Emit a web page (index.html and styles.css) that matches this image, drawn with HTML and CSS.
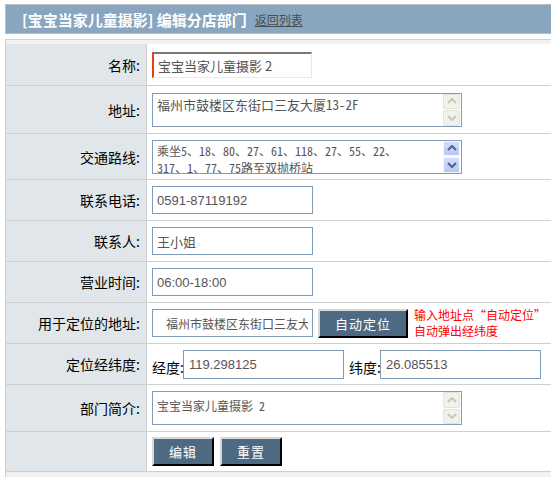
FILE: index.html
```html
<!DOCTYPE html>
<html lang="zh-CN">
<head>
    <meta charset="UTF-8">
    <title>编辑分店部门</title>
    <link rel="stylesheet" href="styles.css">
</head>
<body>
<div class="page">

    <!-- 标题栏 -->
    <div class="titlebar">
        <span class="title">[宝宝当家儿童摄影] 编辑分店部门</span>
        <a class="back" href="#">返回列表</a>
    </div>

    <form>
        <table class="edittable">
            <colgroup>
                <col class="labelcol">
                <col>
            </colgroup>
            <tr class="topband"><td colspan="2"></td></tr>
            <tr class="r45">
                <td class="label">名称:</td>
                <td class="field"><input class="nameinput" type="text" value="宝宝当家儿童摄影 2"></td>
            </tr>
            <tr class="r48">
                <td class="label">地址:</td>
                <td class="field">
                    <div class="areabox">
                        <textarea class="area addr">福州市鼓楼区东街口三友大厦13-2F</textarea>
                        <div class="scroll off">
                            <span class="sbtn"><svg width="10" height="6" viewBox="0 0 10 6"><polyline points="1,5 5,1 9,5"/></svg></span>
                            <span class="sbtn"><svg width="10" height="6" viewBox="0 0 10 6"><polyline points="1,1 5,5 9,1"/></svg></span>
                        </div>
                    </div>
                </td>
            </tr>
            <tr class="r46">
                <td class="label">交通路线:</td>
                <td class="field">
                    <div class="areabox">
                        <textarea class="area route">乘坐5、18、80、27、61、118、27、55、22、
317、1、77、75路至双抛桥站</textarea>
                        <div class="scroll on">
                            <span class="sbtn"><svg width="10" height="6" viewBox="0 0 10 6"><polyline points="1,5 5,1 9,5"/></svg></span>
                            <span class="sbtn"><svg width="10" height="6" viewBox="0 0 10 6"><polyline points="1,1 5,5 9,1"/></svg></span>
                        </div>
                    </div>
                </td>
            </tr>
            <tr class="r41">
                <td class="label">联系电话:</td>
                <td class="field"><input class="textinput" type="text" value="0591-87119192"></td>
            </tr>
            <tr class="r41">
                <td class="label">联系人:</td>
                <td class="field"><input class="textinput" type="text" value="王小姐"></td>
            </tr>
            <tr class="r41">
                <td class="label">营业时间:</td>
                <td class="field"><input class="textinput" type="text" value="06:00-18:00"></td>
            </tr>
            <tr class="r41">
                <td class="label">用于定位的地址:</td>
                <td class="field">
                    <div class="line">
                        <input class="textinput locinput" type="text" value="福州市鼓楼区东街口三友大厦13-2F">
                        <button class="btn locbtn" type="button">自动定位</button>
                        <span class="tip">输入地址点“自动定位”<br>自动弹出经纬度</span>
                    </div>
                </td>
            </tr>
            <tr class="r41">
                <td class="label">定位经纬度:</td>
                <td class="field">
                    <div class="line coords">
                        <span class="sublabel">经度:</span>
                        <input class="coordinput" type="text" value="119.298125">
                        <span class="sublabel lat">纬度:</span>
                        <input class="coordinput" type="text" value="26.085513">
                    </div>
                </td>
            </tr>
            <tr class="r47">
                <td class="label">部门简介:</td>
                <td class="field">
                    <div class="areabox">
                        <textarea class="area intro">宝宝当家儿童摄影 2</textarea>
                        <div class="scroll off">
                            <span class="sbtn"><svg width="10" height="6" viewBox="0 0 10 6"><polyline points="1,5 5,1 9,5"/></svg></span>
                            <span class="sbtn"><svg width="10" height="6" viewBox="0 0 10 6"><polyline points="1,1 5,5 9,1"/></svg></span>
                        </div>
                    </div>
                </td>
            </tr>
            <tr class="r40">
                <td class="label"></td>
                <td class="field">
                    <div class="line buttons">
                        <button class="btn" type="button">编辑</button>
                        <button class="btn" type="reset">重置</button>
                    </div>
                </td>
            </tr>
            <tr class="bottomband"><td colspan="2"></td></tr>
        </table>
    </form>

</div>
</body>
</html>
```

FILE: styles.css
```css
html, body {
    overflow: hidden;
}

body {
    margin: 0;
    padding: 4px 0 0 5px;
    background: #fff;
    font-family: "Noto Sans CJK SC", sans-serif;
    color: #000;
}

.page {
    width: 560px;
}

/* Title bar */
.titlebar {
    height: 28px;
    border: 1px solid #bdbdbd;
    background: #88a6bf;
    display: flex;
    align-items: center;
    padding-left: 16px;
}

.title {
    color: #fff;
    font-weight: bold;
    font-size: 15px;
}

.back {
    margin-left: 8px;
    font-size: 12px;
    color: #4a4a4a;
    text-decoration: underline;
}

/* Form table */
.edittable {
    margin-top: 5px;
    width: 100%;
    border-collapse: collapse;
    table-layout: fixed;
    border-left: 1px solid #cccccc;
}

.labelcol {
    width: 141px;
}

.edittable td {
    padding: 0;
    border-bottom: 1px solid #cfcfcf;
}

.topband td {
    height: 4px;
    border-top: 1px solid #d0d0d0;
    border-bottom: none;
    background: linear-gradient(#ececec, #f9f9f9);
}

.bottomband td {
    height: 6px;
    border-bottom: none;
    background: #f1f1f1;
}

.r45 td { height: 41px; }
.r48 td { height: 47px; }
.r46 td { height: 45px; }
.r41 td { height: 40px; }
.r47 td { height: 46px; }
.r40 td { height: 39px; }

.label {
    background: #e1e6eb;
    text-align: right;
    padding-right: 6px !important;
    font-size: 14px;
    border-right: 1px solid #cfcfcf;
}

.field {
    padding-left: 5px !important;
}

/* Inputs */
input, textarea, button {
    font-family: "Noto Sans CJK SC", sans-serif;
    margin: 0;
    box-sizing: border-box;
    outline: none;
}

.nameinput {
    width: 160px;
    height: 26px;
    border-style: solid;
    border-width: 2px 1px 1px 2px;
    border-color: #7b7a6c #ecebdc #ecebdc #e8400f;
    padding: 0 4px;
    font-size: 13px;
    color: #555;
    display: block;
}

.textinput {
    width: 161px;
    height: 28px;
    border: 1px solid #7f9db9;
    padding: 0 4px;
    font-family: "Liberation Sans", "Noto Sans CJK SC", sans-serif;
    font-size: 13px;
    color: #555;
    display: block;
}

.locinput {
    padding-left: 13px;
    font-family: "Noto Sans CJK SC", sans-serif;
    font-size: 12px;
}

.areabox {
    width: 310px;
    height: 34px;
    box-sizing: border-box;
    border: 1px solid #7f9db9;
    display: flex;
    background: #fff;
}

.area {
    flex: 1;
    border: none;
    resize: none;
    overflow: hidden;
    padding: 2px 4px;
    font-family: "Noto Sans Mono CJK SC", "Noto Sans CJK SC", monospace;
    font-size: 13px;
    line-height: 17px;
    color: #555;
    white-space: pre;
}

.route {
    font-size: 12px;
    padding-top: 1px;
}

.intro {
    font-size: 12px;
    padding-top: 5px;
}

/* Scroll arrows beside the text areas */
.scroll {
    width: 17px;
    display: flex;
    flex-direction: column;
    gap: 1px;
    padding: 0 1px 0 0;
}

.sbtn {
    flex: 1;
    display: flex;
    align-items: center;
    justify-content: center;
    border-radius: 2px;
}

.sbtn svg polyline {
    fill: none;
    stroke-width: 2;
}

.scroll.off .sbtn {
    background: #f2f1ea;
    border: 1px solid #e4e3da;
}

.scroll.off polyline {
    stroke: #c8c7bd;
}

.scroll.on .sbtn {
    background: linear-gradient(#d2defd, #b5c8f6);
    border: 1px solid #f5f7ff;
}

.scroll.on polyline {
    stroke: #4d6185;
}

/* Rows with several controls */
.line {
    display: flex;
    align-items: center;
}

.btn {
    height: 29px;
    background: #4e6a83;
    color: #fff;
    font-size: 13px;
    letter-spacing: 1px;
    border-style: solid;
    border-width: 2px;
    border-color: #d8d8d8 #000 #000 #d8d8d8;
    cursor: pointer;
    padding: 0;
}

.locbtn {
    width: 90px;
    margin-left: 5px;
}

.tip {
    margin-left: 6px;
    color: #ff0000;
    font-size: 12px;
    line-height: 16px;
    white-space: nowrap;
}

.buttons {
    gap: 6px;
}

.buttons .btn {
    width: 62px;
}

.sublabel {
    width: 31px;
    font-size: 14px;
    padding-top: 6px;
    white-space: nowrap;
}

.lat {
    margin-left: 5px;
}

.coordinput {
    width: 161px;
    height: 29px;
    border: 1px solid #7f9db9;
    padding: 0 5px;
    font-family: "Liberation Sans", sans-serif;
    font-size: 13px;
    color: #555;
}
```
